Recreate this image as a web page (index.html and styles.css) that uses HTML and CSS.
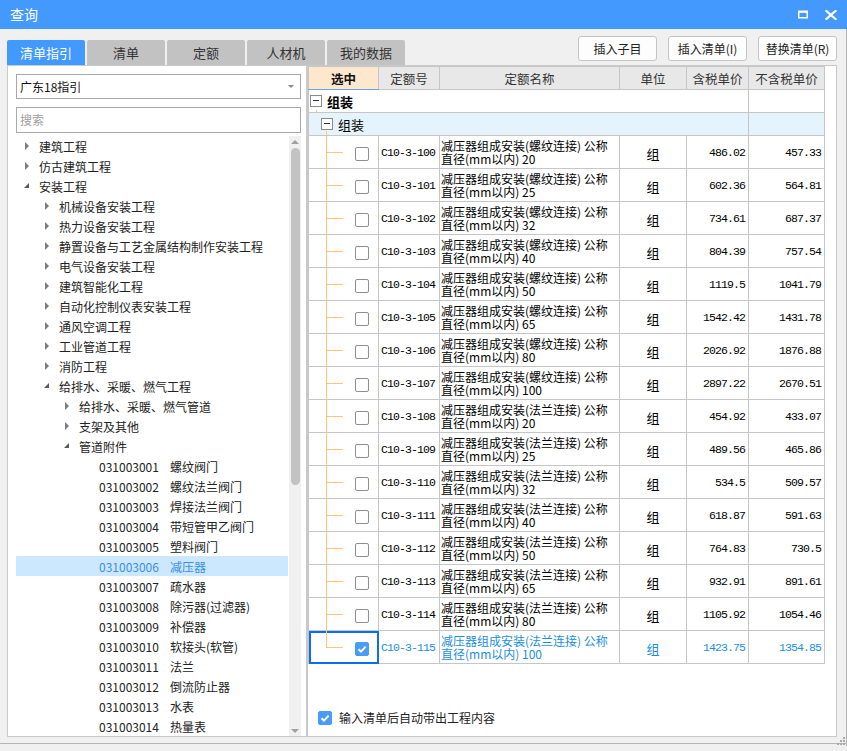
FILE: index.html
```html
<!DOCTYPE html>
<html lang="zh-CN">
<head>
<meta charset="utf-8">
<title>查询</title>
<link rel="stylesheet" href="styles.css">
</head>
<body>
<div class="window">
  <div class="titlebar">
    <span class="title">查询</span>
    <div class="winbtns">
      <svg class="ico" width="12" height="10" viewBox="0 0 12 10"><rect x="1.75" y="1.5" width="8.5" height="6.25" fill="none" stroke="#fff" stroke-width="1.5"/><rect x="1" y="0.75" width="10" height="2" fill="#fff"/></svg>
      <svg class="ico" width="12" height="10" viewBox="0 0 12 10"><path d="M1.5 1 L10.5 9 M10.5 1 L1.5 9" stroke="#fff" stroke-width="2.2" stroke-linecap="square"/></svg>
    </div>
  </div>
  <div class="main">
    <div class="toolbar">
      <div class="tabs">
        <div class="tab active">清单指引</div>
        <div class="tab">清单</div>
        <div class="tab">定额</div>
        <div class="tab">人材机</div>
        <div class="tab">我的数据</div>
      </div>
      <div class="buttons">
        <button class="btn">插入子目</button>
        <button class="btn">插入清单(I)</button>
        <button class="btn">替换清单(R)</button>
      </div>
    </div>
    <div class="content">
      <div class="leftpanel">
        <div class="combo"><span>广东18指引</span><i class="combo-arrow"></i></div>
        <div class="search">搜索</div>
        <div class="treebox">
          <div class="tree">
            <div class="node l0"><i class="tw closed"></i><span>建筑工程</span></div>
            <div class="node l0"><i class="tw closed"></i><span>仿古建筑工程</span></div>
            <div class="node l0"><i class="tw open"></i><span>安装工程</span></div>
            <div class="node l1"><i class="tw closed"></i><span>机械设备安装工程</span></div>
            <div class="node l1"><i class="tw closed"></i><span>热力设备安装工程</span></div>
            <div class="node l1"><i class="tw closed"></i><span>静置设备与工艺金属结构制作安装工程</span></div>
            <div class="node l1"><i class="tw closed"></i><span>电气设备安装工程</span></div>
            <div class="node l1"><i class="tw closed"></i><span>建筑智能化工程</span></div>
            <div class="node l1"><i class="tw closed"></i><span>自动化控制仪表安装工程</span></div>
            <div class="node l1"><i class="tw closed"></i><span>通风空调工程</span></div>
            <div class="node l1"><i class="tw closed"></i><span>工业管道工程</span></div>
            <div class="node l1"><i class="tw closed"></i><span>消防工程</span></div>
            <div class="node l1"><i class="tw open"></i><span>给排水、采暖、燃气工程</span></div>
            <div class="node l2"><i class="tw closed"></i><span>给排水、采暖、燃气管道</span></div>
            <div class="node l2"><i class="tw closed"></i><span>支架及其他</span></div>
            <div class="node l2"><i class="tw open"></i><span>管道附件</span></div>
            <div class="node l3"><i class="tw"></i><span class="code">031003001</span><span>螺纹阀门</span></div>
            <div class="node l3"><i class="tw"></i><span class="code">031003002</span><span>螺纹法兰阀门</span></div>
            <div class="node l3"><i class="tw"></i><span class="code">031003003</span><span>焊接法兰阀门</span></div>
            <div class="node l3"><i class="tw"></i><span class="code">031003004</span><span>带短管甲乙阀门</span></div>
            <div class="node l3"><i class="tw"></i><span class="code">031003005</span><span>塑料阀门</span></div>
            <div class="node l3 selected"><i class="tw"></i><span class="code">031003006</span><span>减压器</span></div>
            <div class="node l3"><i class="tw"></i><span class="code">031003007</span><span>疏水器</span></div>
            <div class="node l3"><i class="tw"></i><span class="code">031003008</span><span>除污器(过滤器)</span></div>
            <div class="node l3"><i class="tw"></i><span class="code">031003009</span><span>补偿器</span></div>
            <div class="node l3"><i class="tw"></i><span class="code">031003010</span><span>软接头(软管)</span></div>
            <div class="node l3"><i class="tw"></i><span class="code">031003011</span><span>法兰</span></div>
            <div class="node l3"><i class="tw"></i><span class="code">031003012</span><span>倒流防止器</span></div>
            <div class="node l3"><i class="tw"></i><span class="code">031003013</span><span>水表</span></div>
            <div class="node l3"><i class="tw"></i><span class="code">031003014</span><span>热量表</span></div>
          </div>
          <div class="vscroll">
            <i class="sarrow up"></i>
            <div class="thumb"></div>
            <i class="sarrow down"></i>
          </div>
        </div>
      </div>
      <div class="rightpanel">
        <table class="grid">
          <colgroup>
            <col style="width:70px"><col style="width:61px"><col style="width:180px"><col style="width:67px"><col style="width:62px"><col style="width:76px">
          </colgroup>
          <thead>
            <tr>
              <th class="h-sel">选中</th><th>定额号</th><th>定额名称</th><th>单位</th><th>含税单价</th><th>不含税单价</th>
            </tr>
          </thead>
          <tbody>
            <tr class="grp g1">
              <td colspan="5"><div class="gcell"><span class="minus"></span><b>组装</b></div></td><td></td>
            </tr>
            <tr class="grp g2">
              <td colspan="5"><div class="gcell"><span class="minus"></span><span>组装</span></div></td><td></td>
            </tr>
            <tr><td class="sel"><span class="cb"></span></td><td class="code">C10-3-100</td><td class="name">减压器组成安装(螺纹连接) 公称<br>直径(mm以内) 20</td><td class="unit">组</td><td class="num">486.02</td><td class="num">457.33</td></tr>
            <tr><td class="sel"><span class="cb"></span></td><td class="code">C10-3-101</td><td class="name">减压器组成安装(螺纹连接) 公称<br>直径(mm以内) 25</td><td class="unit">组</td><td class="num">602.36</td><td class="num">564.81</td></tr>
            <tr><td class="sel"><span class="cb"></span></td><td class="code">C10-3-102</td><td class="name">减压器组成安装(螺纹连接) 公称<br>直径(mm以内) 32</td><td class="unit">组</td><td class="num">734.61</td><td class="num">687.37</td></tr>
            <tr><td class="sel"><span class="cb"></span></td><td class="code">C10-3-103</td><td class="name">减压器组成安装(螺纹连接) 公称<br>直径(mm以内) 40</td><td class="unit">组</td><td class="num">804.39</td><td class="num">757.54</td></tr>
            <tr><td class="sel"><span class="cb"></span></td><td class="code">C10-3-104</td><td class="name">减压器组成安装(螺纹连接) 公称<br>直径(mm以内) 50</td><td class="unit">组</td><td class="num">1119.5</td><td class="num">1041.79</td></tr>
            <tr><td class="sel"><span class="cb"></span></td><td class="code">C10-3-105</td><td class="name">减压器组成安装(螺纹连接) 公称<br>直径(mm以内) 65</td><td class="unit">组</td><td class="num">1542.42</td><td class="num">1431.78</td></tr>
            <tr><td class="sel"><span class="cb"></span></td><td class="code">C10-3-106</td><td class="name">减压器组成安装(螺纹连接) 公称<br>直径(mm以内) 80</td><td class="unit">组</td><td class="num">2026.92</td><td class="num">1876.88</td></tr>
            <tr><td class="sel"><span class="cb"></span></td><td class="code">C10-3-107</td><td class="name">减压器组成安装(螺纹连接) 公称<br>直径(mm以内) 100</td><td class="unit">组</td><td class="num">2897.22</td><td class="num">2670.51</td></tr>
            <tr><td class="sel"><span class="cb"></span></td><td class="code">C10-3-108</td><td class="name">减压器组成安装(法兰连接) 公称<br>直径(mm以内) 20</td><td class="unit">组</td><td class="num">454.92</td><td class="num">433.07</td></tr>
            <tr><td class="sel"><span class="cb"></span></td><td class="code">C10-3-109</td><td class="name">减压器组成安装(法兰连接) 公称<br>直径(mm以内) 25</td><td class="unit">组</td><td class="num">489.56</td><td class="num">465.86</td></tr>
            <tr><td class="sel"><span class="cb"></span></td><td class="code">C10-3-110</td><td class="name">减压器组成安装(法兰连接) 公称<br>直径(mm以内) 32</td><td class="unit">组</td><td class="num">534.5</td><td class="num">509.57</td></tr>
            <tr><td class="sel"><span class="cb"></span></td><td class="code">C10-3-111</td><td class="name">减压器组成安装(法兰连接) 公称<br>直径(mm以内) 40</td><td class="unit">组</td><td class="num">618.87</td><td class="num">591.63</td></tr>
            <tr><td class="sel"><span class="cb"></span></td><td class="code">C10-3-112</td><td class="name">减压器组成安装(法兰连接) 公称<br>直径(mm以内) 50</td><td class="unit">组</td><td class="num">764.83</td><td class="num">730.5</td></tr>
            <tr><td class="sel"><span class="cb"></span></td><td class="code">C10-3-113</td><td class="name">减压器组成安装(法兰连接) 公称<br>直径(mm以内) 65</td><td class="unit">组</td><td class="num">932.91</td><td class="num">891.61</td></tr>
            <tr><td class="sel"><span class="cb"></span></td><td class="code">C10-3-114</td><td class="name">减压器组成安装(法兰连接) 公称<br>直径(mm以内) 80</td><td class="unit">组</td><td class="num">1105.92</td><td class="num">1054.46</td></tr>
            <tr class="cur"><td class="sel last"><span class="cb checked"><svg width="14" height="14" viewBox="0 0 14 14"><path d="M3.5 7.2 L6 9.6 L10.6 4.6" fill="none" stroke="#fff" stroke-width="2"/></svg></span></td><td class="code">C10-3-115</td><td class="name">减压器组成安装(法兰连接) 公称<br>直径(mm以内) 100</td><td class="unit">组</td><td class="num">1423.75</td><td class="num">1354.85</td></tr>
          </tbody>
        </table>
        <div class="footer">
          <span class="cb checked"><svg width="14" height="14" viewBox="0 0 14 14"><path d="M3.5 7.2 L6 9.6 L10.6 4.6" fill="none" stroke="#fff" stroke-width="2"/></svg></span>
          <span class="footer-text">输入清单后自动带出工程内容</span>
        </div>
      </div>
    </div>
    <svg class="grip" width="9" height="9" viewBox="0 0 9 9"><g fill="#a8a8a8"><rect x="7" y="1" width="2" height="2"/><rect x="4" y="4" width="2" height="2"/><rect x="7" y="4" width="2" height="2"/><rect x="1" y="7" width="2" height="2"/><rect x="4" y="7" width="2" height="2"/><rect x="7" y="7" width="2" height="2"/></g></svg>
  </div>
</div>
</body>
</html>
```

FILE: styles.css
```css
* { box-sizing: border-box; }
html, body { margin: 0; padding: 0; }
body {
  background: #f0f0f0;
  font-family: "Noto Sans CJK SC", "Noto Sans", sans-serif;
  font-size: 12px;
  color: #222;
  width: 847px;
  height: 751px;
  overflow: hidden;
}
.window {
  width: 847px;
  height: 744px;
  border-bottom: 1px solid #b5b5b5;
  display: flex;
  flex-direction: column;
}
.titlebar {
  height: 29px;
  background: #4499ff;
  display: flex;
  align-items: center;
  justify-content: space-between;
  padding: 0 10px 0 10px;
  color: #fff;
}
.title { font-size: 14px; line-height: 29px; }
.winbtns { display: flex; gap: 16px; align-items: center; margin-top: 1px; }
.ico { display: block; }

.main {
  flex: 1;
  position: relative;
  padding: 0 9px 9px 7px;
  border-right: 1px solid #b5b5b5;
  display: flex;
  flex-direction: column;
}
.toolbar {
  height: 36px;
  display: flex;
  justify-content: space-between;
  align-items: flex-start;
}
.tabs { display: flex; gap: 2px; margin-top: 11px; }
.tab {
  width: 78px;
  height: 25px;
  background: #c2c2c2;
  border-radius: 2px 2px 0 0;
  text-align: center;
  line-height: 25px;
  font-size: 13px;
  color: #333;
}
.tab.active { background: #4299ff; color: #fff; }
.buttons { display: flex; gap: 11px; margin-top: 7px; }
.btn {
  width: 79px;
  height: 25px;
  background: #fdfdfd;
  border: 1px solid #c4c4c4;
  border-radius: 3px;
  font-family: "Noto Sans CJK SC", "Noto Sans", sans-serif;
  font-size: 12px;
  color: #222;
  padding: 0;
}

.content { flex: 1; display: flex; min-height: 0; }

.leftpanel {
  width: 300px;
  background: #fff;
  border: 1px solid #c9c9c9;
  padding: 8px 5px 0 8px;
  display: flex;
  flex-direction: column;
}
.combo {
  height: 25px;
  border: 1px solid #a9a9a9;
  display: flex;
  align-items: center;
  justify-content: space-between;
  padding: 0 6px 0 3px;
  font-size: 12px;
  color: #111;
}
.combo-arrow {
  width: 0; height: 0;
  border-left: 3px solid transparent;
  border-right: 3px solid transparent;
  border-top: 3px solid #888;
}
.search {
  height: 26px;
  margin-top: 8px;
  border: 1px solid #a9a9a9;
  padding-left: 3px;
  line-height: 24px;
  color: #a0a0a0;
  font-size: 12px;
}
.treebox {
  flex: 1;
  margin-top: 3px;
  display: flex;
  min-height: 0;
}
.tree { flex: 1; overflow: hidden; padding-right: 1px; }
.node {
  height: 20px;
  display: flex;
  align-items: center;
  white-space: nowrap;
  color: #222;
  font-size: 12px;
}
.node.l0 { padding-left: 8px; }
.node.l1 { padding-left: 28px; }
.node.l2 { padding-left: 48px; }
.node.l3 { padding-left: 68px; }
.tw { width: 15px; height: 20px; position: relative; flex: none; }
.tw.closed::before {
  content: "";
  position: absolute;
  left: 1px; top: 6px;
  border-top: 4px solid transparent;
  border-bottom: 4px solid transparent;
  border-left: 4px solid #7d7d7d;
}
.tw.open::before {
  content: "";
  position: absolute;
  left: 0; top: 7px;
  border-left: 5px solid transparent;
  border-bottom: 5px solid #595959;
}
.code { width: 71px; flex: none; }
.node.selected { background: #cce8ff; color: #3a8ee6; }

.vscroll {
  width: 12px;
  background: #f0f0f0;
  position: relative;
  display: flex;
  flex-direction: column;
  align-items: center;
}
.sarrow { width: 0; height: 0; margin: 4px 0; flex: none; }
.sarrow.up { border-left: 4px solid transparent; border-right: 4px solid transparent; border-bottom: 4px solid #a0a0a0; }
.sarrow.down { border-left: 4px solid transparent; border-right: 4px solid transparent; border-top: 4px solid #a0a0a0; margin-top: auto; margin-bottom: 3px; }
.thumb {
  width: 9px;
  height: 337px;
  background: #c2c2c2;
  border-radius: 5px;
  margin-top: 0;
}

.rightpanel {
  width: 530px;
  background: #fff;
  border: 1px solid #c9c9c9;
  display: flex;
  flex-direction: column;
}
.grid {
  table-layout: fixed;
  border-collapse: collapse;
  width: 516px;
  font-size: 12px;
  color: #000;
}
.grid th, .grid td {
  border: 1px solid #c6c6c6;
  padding: 0;
}
.grid th {
  height: 23px;
  background: #e8e8e8;
  font-weight: normal;
  color: #333;
  font-size: 12.5px;
}
.grid th.h-sel {
  background: #fde8cd;
  font-weight: bold;
  color: #111;
  border-bottom: 1px solid #6aa3e2;
}
.grid tr.grp td { height: 23px; }
.grid tr.g2 td { background: #e5f3fd; }
.gcell { display: flex; align-items: center; font-size: 13px; position: relative; }
.g1 .gcell b { margin-left: 5px; }
.g2 .gcell { padding-left: 11px; }
.g2 .gcell span:last-child { margin-left: 5px; }
.minus {
  width: 12px; height: 12px;
  border: 1px solid #8a8a8a;
  background: #fff;
  position: relative;
  flex: none;
  margin-left: 1px;
}
.minus::after {
  content: "";
  position: absolute;
  left: 2px; right: 2px; top: 4px;
  height: 1px;
  background: #333;
}
.g1 .gcell::after {
  content: "";
  position: absolute;
  left: 7px; top: 18px;
  width: 5px; height: 12px;
  border-left: 1px solid #ffc677;
  border-bottom: 1px solid #ffc677;
}
.g2 td:first-child { position: relative; }
.g2 td:first-child::after {
  content: "";
  position: absolute;
  left: 17px; top: 18px; bottom: -1px;
  width: 1px;
  background: #ffc677;
}
.grid tbody tr td { height: 33px; }
.grid tbody tr.grp td { height: 23px; }
td.sel { position: relative; text-align: right; padding-right: 9px; }
td.sel::before {
  content: "";
  position: absolute;
  left: 17px; top: -1px; bottom: -1px;
  width: 1px;
  background: #ffc677;
}
td.sel.last::before { bottom: 50%; }
td.sel::after {
  content: "";
  position: absolute;
  left: 17px; top: 50%;
  width: 17px; height: 1px;
  background: #ffc677;
}
.cb {
  display: inline-block;
  width: 14px; height: 14px;
  border: 1px solid #8f8f8f;
  border-radius: 2px;
  background: #fff;
  vertical-align: middle;
}
.cb.checked { background: #4a9bf5; border-color: #4a9bf5; }
.cb svg { display: block; margin: -1px; }
td.code {
  font-family: "Liberation Mono", monospace;
  font-size: 11.5px;
  letter-spacing: -0.9px;
  padding-left: 2px;
  white-space: nowrap;
}
td.name {
  line-height: 13px;
  white-space: nowrap;
  overflow: hidden;
  padding-left: 1px;
  font-size: 12px;
}
td.unit { text-align: center; font-size: 13px; padding-top: 3px; }
td.num {
  text-align: right;
  font-family: "Liberation Mono", monospace;
  font-size: 11.5px;
  letter-spacing: -0.9px;
  padding-right: 3px;
}
tr.cur td { color: #1a8fe0; }
tr.cur td.sel { outline: 2px solid #0c6cf2; outline-offset: -2px; }

.footer {
  margin-top: auto;
  margin-bottom: 10px;
  padding-left: 10px;
  display: flex;
  align-items: center;
  gap: 7px;
}
.footer-text { font-size: 12px; color: #222; }
.grip { position: absolute; right: 1px; bottom: 1px; }
```
